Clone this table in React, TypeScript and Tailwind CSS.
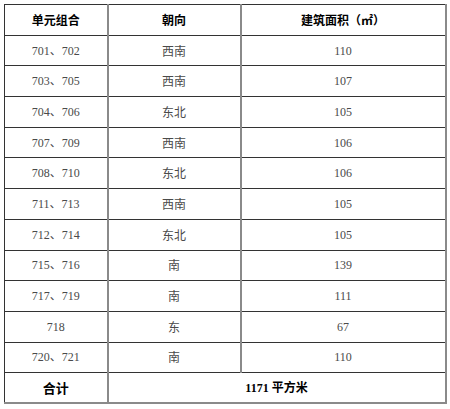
import React from "react";

const rows: [string, string, string][] = [
  ["701、702", "西南", "110"],
  ["703、705", "西南", "107"],
  ["704、706", "东北", "105"],
  ["707、709", "西南", "106"],
  ["708、710", "东北", "106"],
  ["711、713", "西南", "105"],
  ["712、714", "东北", "105"],
  ["715、716", "南", "139"],
  ["717、719", "南", "111"],
  ["718", "东", "67"],
  ["720、721", "南", "110"],
];

const font = { fontFamily: '"Liberation Serif", "Noto Sans CJK SC", serif' };

export default function App() {
  return (
    <div className="w-[450px] h-[409px] bg-white pt-[4px] pl-[4px]">
      <table
        className="table-fixed border-collapse w-[441px] text-[12px] text-[#4a4a4a]"
        style={font}
      >
        <colgroup>
          <col className="w-[103px]" />
          <col className="w-[133px]" />
          <col className="w-[205px]" />
        </colgroup>
        <tbody>
          <tr className="h-[30.7px]">
            <td className="border-t border-b border-l border-r-2 border-t-[#333] border-b-[#333] border-l-[#333] border-r-[#8a8a8a] text-center font-bold text-black [font-family:'Noto_Sans_CJK_SC',sans-serif]">
              单元组合
            </td>
            <td className="border-t border-b border-r-2 border-t-[#333] border-b-[#333] border-r-[#8a8a8a] text-center font-bold text-black [font-family:'Noto_Sans_CJK_SC',sans-serif]">
              朝向
            </td>
            <td className="border-t border-b border-r-2 border-t-[#333] border-b-[#333] border-r-[#8a8a8a] text-center font-bold text-black [font-family:'Noto_Sans_CJK_SC',sans-serif]">
              建筑面积（㎡）
            </td>
          </tr>
          {rows.map((r, i) => (
            <tr key={i} className="h-[30.7px]">
              <td className="border-b border-l border-r-2 border-b-[#333] border-l-[#333] border-r-[#8a8a8a] text-center">
                {r[0]}
              </td>
              <td className="border-b border-r-2 border-b-[#333] border-r-[#8a8a8a] text-center [font-family:'Noto_Sans_CJK_SC',sans-serif]">
                {r[1]}
              </td>
              <td className="border-b border-r-2 border-b-[#333] border-r-[#8a8a8a] text-center">
                {r[2]}
              </td>
            </tr>
          ))}
          <tr className="h-[30.7px]">
            <td className="border-b-2 border-l border-r-2 border-b-[#8a8a8a] border-l-[#333] border-r-[#8a8a8a] text-center font-bold text-black text-[13px] [font-family:'Noto_Sans_CJK_SC',sans-serif]">
              合计
            </td>
            <td
              colSpan={2}
              className="border-b-2 border-r-2 border-b-[#8a8a8a] border-r-[#8a8a8a] text-center font-bold text-black"
            >
              1171 平方米
            </td>
          </tr>
        </tbody>
      </table>
    </div>
  );
}
